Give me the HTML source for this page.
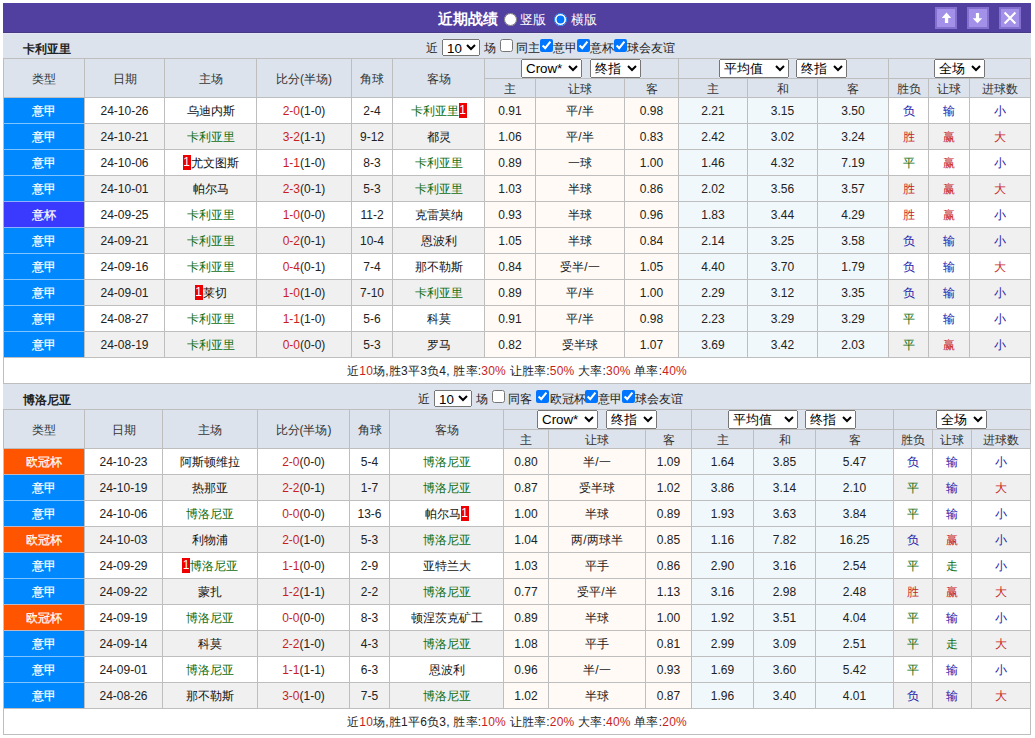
<!DOCTYPE html>
<html><head><meta charset="utf-8"><title>近期战绩</title>
<style>
html,body{margin:0;padding:0;background:#fff;width:1035px;height:738px;overflow:hidden;}
body{font-family:"Liberation Sans",sans-serif;font-size:12px;color:#333;position:relative;}

.c{position:absolute;box-sizing:border-box;white-space:nowrap;overflow:hidden;}
.tn{position:absolute;font-weight:bold;font-size:12px;line-height:32px;height:25px;color:#222;}
.ft{position:absolute;height:25px;line-height:31px;font-size:12px;white-space:nowrap;color:#222;}
.cb{position:absolute;width:13px;height:13px;margin:0;}
.s10{position:absolute;font-family:"Liberation Sans",sans-serif;font-size:13.33px;height:17px;width:38px;padding:0;margin:0;}
.sel{position:absolute;font-family:"Liberation Sans",sans-serif;font-size:13.33px;height:19px;padding:0;margin:0;}
.rc{display:inline-block;background:#e00;color:#fff;line-height:15px;height:15px;width:8px;text-align:center;vertical-align:1px;font-size:12px;}
.title{position:absolute;left:438px;top:4px;height:30px;line-height:30px;color:#fff;font-weight:bold;font-size:15px;}
.rd{position:absolute;width:13px;height:13px;margin:0;}
.rl{position:absolute;top:5px;height:30px;line-height:30px;color:#fff;font-size:12.5px;white-space:nowrap;}
.radios input{width:13px;height:13px;margin:0 4px 0 2px;vertical-align:-2px;position:relative;top:-1px}
.radios span{margin-right:6px;}
.btn{position:absolute;width:22px;height:22px;box-sizing:border-box;background:#a390e8;border:2px solid #8470cf;}
.btn svg{position:absolute;left:-2px;top:-2px;}
</style></head><body>
<div class="c" style="left:3px;top:3px;width:1028px;height:30px;background:#5240a0"></div>
<div class="c" style="left:3px;top:32px;width:1028px;height:1px;background:#463a82"></div>
<div class="title">近期战绩</div>
<input type="radio" name="v" class="rd" style="left:504px;top:13px"><div class="rl" style="left:519.5px">竖版</div><input type="radio" name="v" checked class="rd" style="left:554px;top:13px"><div class="rl" style="left:570.5px">横版</div>
<div class="btn" style="left:935px;top:7px"><svg width="22" height="22" viewBox="0 0 22 22"><path d="M11.5 5.6 L16.3 11 L13.2 11 L13.2 16.1 L9.9 16.1 L9.9 11 L6.7 11 Z" fill="#fff"/></svg></div>
<div class="btn" style="left:967px;top:7px"><svg width="22" height="22" viewBox="0 0 22 22"><path d="M10.5 16.3 L15.3 11.2 L12.1 11.2 L12.1 6 L8.9 6 L8.9 11.2 L5.7 11.2 Z" fill="#fff"/></svg></div>
<div class="btn" style="left:999px;top:7px"><svg width="22" height="22" viewBox="0 0 22 22"><path d="M5.6 5.4 L16.4 16.6 M16.4 5.4 L5.6 16.6" stroke="#fff" stroke-width="2.1"/></svg></div>
<div class="c" style="left:3px;top:33px;width:1028px;height:25px;background:#dce3ec;"></div>
<div class="tn" style="left:23px;top:33px">卡利亚里</div>
<div class="ft" style="left:425.5px;top:33px">近</div>
<select class="s10" style="left:442px;top:39px"><option>10</option></select>
<div class="ft" style="left:483.5px;top:33px">场</div>
<input type="checkbox" class="cb" style="left:500px;top:39px">
<div class="ft" style="left:516px;top:33px">同主</div>
<input type="checkbox" class="cb" style="left:540px;top:39px" checked>
<div class="ft" style="left:553px;top:33px">意甲</div>
<input type="checkbox" class="cb" style="left:577px;top:39px" checked>
<div class="ft" style="left:590px;top:33px">意杯</div>
<input type="checkbox" class="cb" style="left:614px;top:39px" checked>
<div class="ft" style="left:627px;top:33px">球会友谊</div>
<div class="c" style="left:3px;top:58px;width:1028px;height:326px;background:#bebebe;"></div>
<div class="c" style="left:4px;top:59px;width:80px;height:38px;background:#dce3ec;text-align:center;color:#333;line-height:40px;">类型</div>
<div class="c" style="left:85px;top:59px;width:79px;height:38px;background:#dce3ec;text-align:center;color:#333;line-height:40px;">日期</div>
<div class="c" style="left:165px;top:59px;width:91px;height:38px;background:#dce3ec;text-align:center;color:#333;line-height:40px;">主场</div>
<div class="c" style="left:257px;top:59px;width:94px;height:38px;background:#dce3ec;text-align:center;color:#333;line-height:40px;">比分(半场)</div>
<div class="c" style="left:352px;top:59px;width:40px;height:38px;background:#dce3ec;text-align:center;color:#333;line-height:40px;">角球</div>
<div class="c" style="left:393px;top:59px;width:91px;height:38px;background:#dce3ec;text-align:center;color:#333;line-height:40px;">客场</div>
<div class="c" style="left:485px;top:59px;width:193px;height:19px;background:#dce3ec;line-height:21px;"></div>
<div class="c" style="left:679px;top:59px;width:209px;height:19px;background:#dce3ec;line-height:21px;"></div>
<div class="c" style="left:889px;top:59px;width:141px;height:19px;background:#dce3ec;line-height:21px;"></div>
<div class="c" style="left:485px;top:79px;width:50px;height:18px;background:#dce3ec;text-align:center;color:#333;line-height:20px;">主</div>
<div class="c" style="left:536px;top:79px;width:88px;height:18px;background:#dce3ec;text-align:center;color:#333;line-height:20px;">让球</div>
<div class="c" style="left:625px;top:79px;width:53px;height:18px;background:#dce3ec;text-align:center;color:#333;line-height:20px;">客</div>
<div class="c" style="left:679px;top:79px;width:68px;height:18px;background:#dce3ec;text-align:center;color:#333;line-height:20px;">主</div>
<div class="c" style="left:748px;top:79px;width:69px;height:18px;background:#dce3ec;text-align:center;color:#333;line-height:20px;">和</div>
<div class="c" style="left:818px;top:79px;width:70px;height:18px;background:#dce3ec;text-align:center;color:#333;line-height:20px;">客</div>
<div class="c" style="left:889px;top:79px;width:39px;height:18px;background:#dce3ec;text-align:center;color:#333;line-height:20px;">胜负</div>
<div class="c" style="left:929px;top:79px;width:40px;height:18px;background:#dce3ec;text-align:center;color:#333;line-height:20px;">让球</div>
<div class="c" style="left:970px;top:79px;width:60px;height:18px;background:#dce3ec;text-align:center;color:#333;line-height:20px;">进球数</div>
<select class="sel" style="left:521px;top:59px;width:61px"><option>Crow*</option></select>
<select class="sel" style="left:590px;top:59px;width:51px"><option>终指</option></select>
<select class="sel" style="left:719px;top:59px;width:70px"><option>平均值</option></select>
<select class="sel" style="left:796px;top:59px;width:51px"><option>终指</option></select>
<select class="sel" style="left:934px;top:59px;width:51px"><option>全场</option></select>
<div class="c" style="left:4px;top:98px;width:80px;height:25px;background:#0088ff;text-align:center;color:#fff;-webkit-text-stroke:0.25px #fff;line-height:27px;">意甲</div>
<div class="c" style="left:3px;top:98px;width:1px;height:25px;background:#8cc9ff;"></div>
<div class="c" style="left:4px;top:123px;width:80px;height:1px;background:#7fc3ff;"></div>
<div class="c" style="left:85px;top:98px;width:79px;height:25px;background:#ffffff;text-align:center;color:#222;line-height:27px;">24-10-26</div>
<div class="c" style="left:165px;top:98px;width:91px;height:25px;background:#ffffff;text-align:center;line-height:27px;"><span style="color:#111">乌迪内斯</span></div>
<div class="c" style="left:257px;top:98px;width:94px;height:25px;background:#ffffff;text-align:center;line-height:27px;"><span style="color:#c81e1e">2-0</span><span style="color:#222">(1-0)</span></div>
<div class="c" style="left:352px;top:98px;width:40px;height:25px;background:#ffffff;text-align:center;color:#222;line-height:27px;">2-4</div>
<div class="c" style="left:393px;top:98px;width:91px;height:25px;background:#ffffff;text-align:center;line-height:27px;"><span style="color:#0f6d0f">卡利亚里</span><span class="rc">1</span></div>
<div class="c" style="left:485px;top:98px;width:50px;height:25px;background:#fffaf6;text-align:center;color:#222;line-height:27px;">0.91</div>
<div class="c" style="left:536px;top:98px;width:88px;height:25px;background:#fffaf6;text-align:center;color:#222;line-height:27px;">平/半</div>
<div class="c" style="left:625px;top:98px;width:53px;height:25px;background:#fffaf6;text-align:center;color:#222;line-height:27px;">0.98</div>
<div class="c" style="left:679px;top:98px;width:68px;height:25px;background:#f1f8fc;text-align:center;color:#222;line-height:27px;">2.21</div>
<div class="c" style="left:748px;top:98px;width:69px;height:25px;background:#f1f8fc;text-align:center;color:#222;line-height:27px;">3.15</div>
<div class="c" style="left:818px;top:98px;width:70px;height:25px;background:#f1f8fc;text-align:center;color:#222;line-height:27px;">3.50</div>
<div class="c" style="left:889px;top:98px;width:39px;height:25px;background:#ffffff;text-align:center;color:#1a1aaa;line-height:27px;">负</div>
<div class="c" style="left:929px;top:98px;width:40px;height:25px;background:#ffffff;text-align:center;color:#1a1aaa;line-height:27px;">输</div>
<div class="c" style="left:970px;top:98px;width:60px;height:25px;background:#ffffff;text-align:center;color:#1a1aaa;line-height:27px;">小</div>
<div class="c" style="left:4px;top:124px;width:80px;height:25px;background:#0088ff;text-align:center;color:#fff;-webkit-text-stroke:0.25px #fff;line-height:27px;">意甲</div>
<div class="c" style="left:3px;top:124px;width:1px;height:25px;background:#8cc9ff;"></div>
<div class="c" style="left:4px;top:149px;width:80px;height:1px;background:#7fc3ff;"></div>
<div class="c" style="left:85px;top:124px;width:79px;height:25px;background:#f0f0f0;text-align:center;color:#222;line-height:27px;">24-10-21</div>
<div class="c" style="left:165px;top:124px;width:91px;height:25px;background:#f0f0f0;text-align:center;line-height:27px;"><span style="color:#0f6d0f">卡利亚里</span></div>
<div class="c" style="left:257px;top:124px;width:94px;height:25px;background:#f0f0f0;text-align:center;line-height:27px;"><span style="color:#c81e1e">3-2</span><span style="color:#222">(1-1)</span></div>
<div class="c" style="left:352px;top:124px;width:40px;height:25px;background:#f0f0f0;text-align:center;color:#222;line-height:27px;">9-12</div>
<div class="c" style="left:393px;top:124px;width:91px;height:25px;background:#f0f0f0;text-align:center;line-height:27px;"><span style="color:#111">都灵</span></div>
<div class="c" style="left:485px;top:124px;width:50px;height:25px;background:#fffaf6;text-align:center;color:#222;line-height:27px;">1.06</div>
<div class="c" style="left:536px;top:124px;width:88px;height:25px;background:#fffaf6;text-align:center;color:#222;line-height:27px;">平/半</div>
<div class="c" style="left:625px;top:124px;width:53px;height:25px;background:#fffaf6;text-align:center;color:#222;line-height:27px;">0.83</div>
<div class="c" style="left:679px;top:124px;width:68px;height:25px;background:#f1f8fc;text-align:center;color:#222;line-height:27px;">2.42</div>
<div class="c" style="left:748px;top:124px;width:69px;height:25px;background:#f1f8fc;text-align:center;color:#222;line-height:27px;">3.02</div>
<div class="c" style="left:818px;top:124px;width:70px;height:25px;background:#f1f8fc;text-align:center;color:#222;line-height:27px;">3.24</div>
<div class="c" style="left:889px;top:124px;width:39px;height:25px;background:#f0f0f0;text-align:center;color:#c81e1e;line-height:27px;">胜</div>
<div class="c" style="left:929px;top:124px;width:40px;height:25px;background:#f0f0f0;text-align:center;color:#c81e1e;line-height:27px;">赢</div>
<div class="c" style="left:970px;top:124px;width:60px;height:25px;background:#f0f0f0;text-align:center;color:#c81e1e;line-height:27px;">大</div>
<div class="c" style="left:4px;top:150px;width:80px;height:25px;background:#0088ff;text-align:center;color:#fff;-webkit-text-stroke:0.25px #fff;line-height:27px;">意甲</div>
<div class="c" style="left:3px;top:150px;width:1px;height:25px;background:#8cc9ff;"></div>
<div class="c" style="left:4px;top:175px;width:80px;height:1px;background:#7fc3ff;"></div>
<div class="c" style="left:85px;top:150px;width:79px;height:25px;background:#ffffff;text-align:center;color:#222;line-height:27px;">24-10-06</div>
<div class="c" style="left:165px;top:150px;width:91px;height:25px;background:#ffffff;text-align:center;line-height:27px;"><span class="rc">1</span><span style="color:#111">尤文图斯</span></div>
<div class="c" style="left:257px;top:150px;width:94px;height:25px;background:#ffffff;text-align:center;line-height:27px;"><span style="color:#c81e1e">1-1</span><span style="color:#222">(1-0)</span></div>
<div class="c" style="left:352px;top:150px;width:40px;height:25px;background:#ffffff;text-align:center;color:#222;line-height:27px;">8-3</div>
<div class="c" style="left:393px;top:150px;width:91px;height:25px;background:#ffffff;text-align:center;line-height:27px;"><span style="color:#0f6d0f">卡利亚里</span></div>
<div class="c" style="left:485px;top:150px;width:50px;height:25px;background:#fffaf6;text-align:center;color:#222;line-height:27px;">0.89</div>
<div class="c" style="left:536px;top:150px;width:88px;height:25px;background:#fffaf6;text-align:center;color:#222;line-height:27px;">一球</div>
<div class="c" style="left:625px;top:150px;width:53px;height:25px;background:#fffaf6;text-align:center;color:#222;line-height:27px;">1.00</div>
<div class="c" style="left:679px;top:150px;width:68px;height:25px;background:#f1f8fc;text-align:center;color:#222;line-height:27px;">1.46</div>
<div class="c" style="left:748px;top:150px;width:69px;height:25px;background:#f1f8fc;text-align:center;color:#222;line-height:27px;">4.32</div>
<div class="c" style="left:818px;top:150px;width:70px;height:25px;background:#f1f8fc;text-align:center;color:#222;line-height:27px;">7.19</div>
<div class="c" style="left:889px;top:150px;width:39px;height:25px;background:#ffffff;text-align:center;color:#0f6d0f;line-height:27px;">平</div>
<div class="c" style="left:929px;top:150px;width:40px;height:25px;background:#ffffff;text-align:center;color:#c81e1e;line-height:27px;">赢</div>
<div class="c" style="left:970px;top:150px;width:60px;height:25px;background:#ffffff;text-align:center;color:#1a1aaa;line-height:27px;">小</div>
<div class="c" style="left:4px;top:176px;width:80px;height:25px;background:#0088ff;text-align:center;color:#fff;-webkit-text-stroke:0.25px #fff;line-height:27px;">意甲</div>
<div class="c" style="left:3px;top:176px;width:1px;height:25px;background:#8cc9ff;"></div>
<div class="c" style="left:4px;top:201px;width:80px;height:1px;background:#8eb0ff;"></div>
<div class="c" style="left:85px;top:176px;width:79px;height:25px;background:#f0f0f0;text-align:center;color:#222;line-height:27px;">24-10-01</div>
<div class="c" style="left:165px;top:176px;width:91px;height:25px;background:#f0f0f0;text-align:center;line-height:27px;"><span style="color:#111">帕尔马</span></div>
<div class="c" style="left:257px;top:176px;width:94px;height:25px;background:#f0f0f0;text-align:center;line-height:27px;"><span style="color:#c81e1e">2-3</span><span style="color:#222">(0-1)</span></div>
<div class="c" style="left:352px;top:176px;width:40px;height:25px;background:#f0f0f0;text-align:center;color:#222;line-height:27px;">5-3</div>
<div class="c" style="left:393px;top:176px;width:91px;height:25px;background:#f0f0f0;text-align:center;line-height:27px;"><span style="color:#0f6d0f">卡利亚里</span></div>
<div class="c" style="left:485px;top:176px;width:50px;height:25px;background:#fffaf6;text-align:center;color:#222;line-height:27px;">1.03</div>
<div class="c" style="left:536px;top:176px;width:88px;height:25px;background:#fffaf6;text-align:center;color:#222;line-height:27px;">半球</div>
<div class="c" style="left:625px;top:176px;width:53px;height:25px;background:#fffaf6;text-align:center;color:#222;line-height:27px;">0.86</div>
<div class="c" style="left:679px;top:176px;width:68px;height:25px;background:#f1f8fc;text-align:center;color:#222;line-height:27px;">2.02</div>
<div class="c" style="left:748px;top:176px;width:69px;height:25px;background:#f1f8fc;text-align:center;color:#222;line-height:27px;">3.56</div>
<div class="c" style="left:818px;top:176px;width:70px;height:25px;background:#f1f8fc;text-align:center;color:#222;line-height:27px;">3.57</div>
<div class="c" style="left:889px;top:176px;width:39px;height:25px;background:#f0f0f0;text-align:center;color:#c81e1e;line-height:27px;">胜</div>
<div class="c" style="left:929px;top:176px;width:40px;height:25px;background:#f0f0f0;text-align:center;color:#c81e1e;line-height:27px;">赢</div>
<div class="c" style="left:970px;top:176px;width:60px;height:25px;background:#f0f0f0;text-align:center;color:#c81e1e;line-height:27px;">大</div>
<div class="c" style="left:4px;top:202px;width:80px;height:25px;background:#3a3aff;text-align:center;color:#fff;-webkit-text-stroke:0.25px #fff;line-height:27px;">意杯</div>
<div class="c" style="left:3px;top:202px;width:1px;height:25px;background:#a6a6ff;"></div>
<div class="c" style="left:4px;top:227px;width:80px;height:1px;background:#8eb0ff;"></div>
<div class="c" style="left:85px;top:202px;width:79px;height:25px;background:#ffffff;text-align:center;color:#222;line-height:27px;">24-09-25</div>
<div class="c" style="left:165px;top:202px;width:91px;height:25px;background:#ffffff;text-align:center;line-height:27px;"><span style="color:#0f6d0f">卡利亚里</span></div>
<div class="c" style="left:257px;top:202px;width:94px;height:25px;background:#ffffff;text-align:center;line-height:27px;"><span style="color:#c81e1e">1-0</span><span style="color:#222">(0-0)</span></div>
<div class="c" style="left:352px;top:202px;width:40px;height:25px;background:#ffffff;text-align:center;color:#222;line-height:27px;">11-2</div>
<div class="c" style="left:393px;top:202px;width:91px;height:25px;background:#ffffff;text-align:center;line-height:27px;"><span style="color:#111">克雷莫纳</span></div>
<div class="c" style="left:485px;top:202px;width:50px;height:25px;background:#fffaf6;text-align:center;color:#222;line-height:27px;">0.93</div>
<div class="c" style="left:536px;top:202px;width:88px;height:25px;background:#fffaf6;text-align:center;color:#222;line-height:27px;">半球</div>
<div class="c" style="left:625px;top:202px;width:53px;height:25px;background:#fffaf6;text-align:center;color:#222;line-height:27px;">0.96</div>
<div class="c" style="left:679px;top:202px;width:68px;height:25px;background:#f1f8fc;text-align:center;color:#222;line-height:27px;">1.83</div>
<div class="c" style="left:748px;top:202px;width:69px;height:25px;background:#f1f8fc;text-align:center;color:#222;line-height:27px;">3.44</div>
<div class="c" style="left:818px;top:202px;width:70px;height:25px;background:#f1f8fc;text-align:center;color:#222;line-height:27px;">4.29</div>
<div class="c" style="left:889px;top:202px;width:39px;height:25px;background:#ffffff;text-align:center;color:#c81e1e;line-height:27px;">胜</div>
<div class="c" style="left:929px;top:202px;width:40px;height:25px;background:#ffffff;text-align:center;color:#c81e1e;line-height:27px;">赢</div>
<div class="c" style="left:970px;top:202px;width:60px;height:25px;background:#ffffff;text-align:center;color:#1a1aaa;line-height:27px;">小</div>
<div class="c" style="left:4px;top:228px;width:80px;height:25px;background:#0088ff;text-align:center;color:#fff;-webkit-text-stroke:0.25px #fff;line-height:27px;">意甲</div>
<div class="c" style="left:3px;top:228px;width:1px;height:25px;background:#8cc9ff;"></div>
<div class="c" style="left:4px;top:253px;width:80px;height:1px;background:#7fc3ff;"></div>
<div class="c" style="left:85px;top:228px;width:79px;height:25px;background:#f0f0f0;text-align:center;color:#222;line-height:27px;">24-09-21</div>
<div class="c" style="left:165px;top:228px;width:91px;height:25px;background:#f0f0f0;text-align:center;line-height:27px;"><span style="color:#0f6d0f">卡利亚里</span></div>
<div class="c" style="left:257px;top:228px;width:94px;height:25px;background:#f0f0f0;text-align:center;line-height:27px;"><span style="color:#c81e1e">0-2</span><span style="color:#222">(0-1)</span></div>
<div class="c" style="left:352px;top:228px;width:40px;height:25px;background:#f0f0f0;text-align:center;color:#222;line-height:27px;">10-4</div>
<div class="c" style="left:393px;top:228px;width:91px;height:25px;background:#f0f0f0;text-align:center;line-height:27px;"><span style="color:#111">恩波利</span></div>
<div class="c" style="left:485px;top:228px;width:50px;height:25px;background:#fffaf6;text-align:center;color:#222;line-height:27px;">1.05</div>
<div class="c" style="left:536px;top:228px;width:88px;height:25px;background:#fffaf6;text-align:center;color:#222;line-height:27px;">半球</div>
<div class="c" style="left:625px;top:228px;width:53px;height:25px;background:#fffaf6;text-align:center;color:#222;line-height:27px;">0.84</div>
<div class="c" style="left:679px;top:228px;width:68px;height:25px;background:#f1f8fc;text-align:center;color:#222;line-height:27px;">2.14</div>
<div class="c" style="left:748px;top:228px;width:69px;height:25px;background:#f1f8fc;text-align:center;color:#222;line-height:27px;">3.25</div>
<div class="c" style="left:818px;top:228px;width:70px;height:25px;background:#f1f8fc;text-align:center;color:#222;line-height:27px;">3.58</div>
<div class="c" style="left:889px;top:228px;width:39px;height:25px;background:#f0f0f0;text-align:center;color:#1a1aaa;line-height:27px;">负</div>
<div class="c" style="left:929px;top:228px;width:40px;height:25px;background:#f0f0f0;text-align:center;color:#1a1aaa;line-height:27px;">输</div>
<div class="c" style="left:970px;top:228px;width:60px;height:25px;background:#f0f0f0;text-align:center;color:#1a1aaa;line-height:27px;">小</div>
<div class="c" style="left:4px;top:254px;width:80px;height:25px;background:#0088ff;text-align:center;color:#fff;-webkit-text-stroke:0.25px #fff;line-height:27px;">意甲</div>
<div class="c" style="left:3px;top:254px;width:1px;height:25px;background:#8cc9ff;"></div>
<div class="c" style="left:4px;top:279px;width:80px;height:1px;background:#7fc3ff;"></div>
<div class="c" style="left:85px;top:254px;width:79px;height:25px;background:#ffffff;text-align:center;color:#222;line-height:27px;">24-09-16</div>
<div class="c" style="left:165px;top:254px;width:91px;height:25px;background:#ffffff;text-align:center;line-height:27px;"><span style="color:#0f6d0f">卡利亚里</span></div>
<div class="c" style="left:257px;top:254px;width:94px;height:25px;background:#ffffff;text-align:center;line-height:27px;"><span style="color:#c81e1e">0-4</span><span style="color:#222">(0-1)</span></div>
<div class="c" style="left:352px;top:254px;width:40px;height:25px;background:#ffffff;text-align:center;color:#222;line-height:27px;">7-4</div>
<div class="c" style="left:393px;top:254px;width:91px;height:25px;background:#ffffff;text-align:center;line-height:27px;"><span style="color:#111">那不勒斯</span></div>
<div class="c" style="left:485px;top:254px;width:50px;height:25px;background:#fffaf6;text-align:center;color:#222;line-height:27px;">0.84</div>
<div class="c" style="left:536px;top:254px;width:88px;height:25px;background:#fffaf6;text-align:center;color:#222;line-height:27px;">受半/一</div>
<div class="c" style="left:625px;top:254px;width:53px;height:25px;background:#fffaf6;text-align:center;color:#222;line-height:27px;">1.05</div>
<div class="c" style="left:679px;top:254px;width:68px;height:25px;background:#f1f8fc;text-align:center;color:#222;line-height:27px;">4.40</div>
<div class="c" style="left:748px;top:254px;width:69px;height:25px;background:#f1f8fc;text-align:center;color:#222;line-height:27px;">3.70</div>
<div class="c" style="left:818px;top:254px;width:70px;height:25px;background:#f1f8fc;text-align:center;color:#222;line-height:27px;">1.79</div>
<div class="c" style="left:889px;top:254px;width:39px;height:25px;background:#ffffff;text-align:center;color:#1a1aaa;line-height:27px;">负</div>
<div class="c" style="left:929px;top:254px;width:40px;height:25px;background:#ffffff;text-align:center;color:#1a1aaa;line-height:27px;">输</div>
<div class="c" style="left:970px;top:254px;width:60px;height:25px;background:#ffffff;text-align:center;color:#c81e1e;line-height:27px;">大</div>
<div class="c" style="left:4px;top:280px;width:80px;height:25px;background:#0088ff;text-align:center;color:#fff;-webkit-text-stroke:0.25px #fff;line-height:27px;">意甲</div>
<div class="c" style="left:3px;top:280px;width:1px;height:25px;background:#8cc9ff;"></div>
<div class="c" style="left:4px;top:305px;width:80px;height:1px;background:#7fc3ff;"></div>
<div class="c" style="left:85px;top:280px;width:79px;height:25px;background:#f0f0f0;text-align:center;color:#222;line-height:27px;">24-09-01</div>
<div class="c" style="left:165px;top:280px;width:91px;height:25px;background:#f0f0f0;text-align:center;line-height:27px;"><span class="rc">1</span><span style="color:#111">莱切</span></div>
<div class="c" style="left:257px;top:280px;width:94px;height:25px;background:#f0f0f0;text-align:center;line-height:27px;"><span style="color:#c81e1e">1-0</span><span style="color:#222">(1-0)</span></div>
<div class="c" style="left:352px;top:280px;width:40px;height:25px;background:#f0f0f0;text-align:center;color:#222;line-height:27px;">7-10</div>
<div class="c" style="left:393px;top:280px;width:91px;height:25px;background:#f0f0f0;text-align:center;line-height:27px;"><span style="color:#0f6d0f">卡利亚里</span></div>
<div class="c" style="left:485px;top:280px;width:50px;height:25px;background:#fffaf6;text-align:center;color:#222;line-height:27px;">0.89</div>
<div class="c" style="left:536px;top:280px;width:88px;height:25px;background:#fffaf6;text-align:center;color:#222;line-height:27px;">平/半</div>
<div class="c" style="left:625px;top:280px;width:53px;height:25px;background:#fffaf6;text-align:center;color:#222;line-height:27px;">1.00</div>
<div class="c" style="left:679px;top:280px;width:68px;height:25px;background:#f1f8fc;text-align:center;color:#222;line-height:27px;">2.29</div>
<div class="c" style="left:748px;top:280px;width:69px;height:25px;background:#f1f8fc;text-align:center;color:#222;line-height:27px;">3.12</div>
<div class="c" style="left:818px;top:280px;width:70px;height:25px;background:#f1f8fc;text-align:center;color:#222;line-height:27px;">3.35</div>
<div class="c" style="left:889px;top:280px;width:39px;height:25px;background:#f0f0f0;text-align:center;color:#1a1aaa;line-height:27px;">负</div>
<div class="c" style="left:929px;top:280px;width:40px;height:25px;background:#f0f0f0;text-align:center;color:#1a1aaa;line-height:27px;">输</div>
<div class="c" style="left:970px;top:280px;width:60px;height:25px;background:#f0f0f0;text-align:center;color:#1a1aaa;line-height:27px;">小</div>
<div class="c" style="left:4px;top:306px;width:80px;height:25px;background:#0088ff;text-align:center;color:#fff;-webkit-text-stroke:0.25px #fff;line-height:27px;">意甲</div>
<div class="c" style="left:3px;top:306px;width:1px;height:25px;background:#8cc9ff;"></div>
<div class="c" style="left:4px;top:331px;width:80px;height:1px;background:#7fc3ff;"></div>
<div class="c" style="left:85px;top:306px;width:79px;height:25px;background:#ffffff;text-align:center;color:#222;line-height:27px;">24-08-27</div>
<div class="c" style="left:165px;top:306px;width:91px;height:25px;background:#ffffff;text-align:center;line-height:27px;"><span style="color:#0f6d0f">卡利亚里</span></div>
<div class="c" style="left:257px;top:306px;width:94px;height:25px;background:#ffffff;text-align:center;line-height:27px;"><span style="color:#c81e1e">1-1</span><span style="color:#222">(1-0)</span></div>
<div class="c" style="left:352px;top:306px;width:40px;height:25px;background:#ffffff;text-align:center;color:#222;line-height:27px;">5-6</div>
<div class="c" style="left:393px;top:306px;width:91px;height:25px;background:#ffffff;text-align:center;line-height:27px;"><span style="color:#111">科莫</span></div>
<div class="c" style="left:485px;top:306px;width:50px;height:25px;background:#fffaf6;text-align:center;color:#222;line-height:27px;">0.91</div>
<div class="c" style="left:536px;top:306px;width:88px;height:25px;background:#fffaf6;text-align:center;color:#222;line-height:27px;">平/半</div>
<div class="c" style="left:625px;top:306px;width:53px;height:25px;background:#fffaf6;text-align:center;color:#222;line-height:27px;">0.98</div>
<div class="c" style="left:679px;top:306px;width:68px;height:25px;background:#f1f8fc;text-align:center;color:#222;line-height:27px;">2.23</div>
<div class="c" style="left:748px;top:306px;width:69px;height:25px;background:#f1f8fc;text-align:center;color:#222;line-height:27px;">3.29</div>
<div class="c" style="left:818px;top:306px;width:70px;height:25px;background:#f1f8fc;text-align:center;color:#222;line-height:27px;">3.29</div>
<div class="c" style="left:889px;top:306px;width:39px;height:25px;background:#ffffff;text-align:center;color:#0f6d0f;line-height:27px;">平</div>
<div class="c" style="left:929px;top:306px;width:40px;height:25px;background:#ffffff;text-align:center;color:#1a1aaa;line-height:27px;">输</div>
<div class="c" style="left:970px;top:306px;width:60px;height:25px;background:#ffffff;text-align:center;color:#1a1aaa;line-height:27px;">小</div>
<div class="c" style="left:4px;top:332px;width:80px;height:25px;background:#0088ff;text-align:center;color:#fff;-webkit-text-stroke:0.25px #fff;line-height:27px;">意甲</div>
<div class="c" style="left:3px;top:332px;width:1px;height:25px;background:#8cc9ff;"></div>
<div class="c" style="left:85px;top:332px;width:79px;height:25px;background:#f0f0f0;text-align:center;color:#222;line-height:27px;">24-08-19</div>
<div class="c" style="left:165px;top:332px;width:91px;height:25px;background:#f0f0f0;text-align:center;line-height:27px;"><span style="color:#0f6d0f">卡利亚里</span></div>
<div class="c" style="left:257px;top:332px;width:94px;height:25px;background:#f0f0f0;text-align:center;line-height:27px;"><span style="color:#c81e1e">0-0</span><span style="color:#222">(0-0)</span></div>
<div class="c" style="left:352px;top:332px;width:40px;height:25px;background:#f0f0f0;text-align:center;color:#222;line-height:27px;">5-3</div>
<div class="c" style="left:393px;top:332px;width:91px;height:25px;background:#f0f0f0;text-align:center;line-height:27px;"><span style="color:#111">罗马</span></div>
<div class="c" style="left:485px;top:332px;width:50px;height:25px;background:#fffaf6;text-align:center;color:#222;line-height:27px;">0.82</div>
<div class="c" style="left:536px;top:332px;width:88px;height:25px;background:#fffaf6;text-align:center;color:#222;line-height:27px;">受半球</div>
<div class="c" style="left:625px;top:332px;width:53px;height:25px;background:#fffaf6;text-align:center;color:#222;line-height:27px;">1.07</div>
<div class="c" style="left:679px;top:332px;width:68px;height:25px;background:#f1f8fc;text-align:center;color:#222;line-height:27px;">3.69</div>
<div class="c" style="left:748px;top:332px;width:69px;height:25px;background:#f1f8fc;text-align:center;color:#222;line-height:27px;">3.42</div>
<div class="c" style="left:818px;top:332px;width:70px;height:25px;background:#f1f8fc;text-align:center;color:#222;line-height:27px;">2.03</div>
<div class="c" style="left:889px;top:332px;width:39px;height:25px;background:#f0f0f0;text-align:center;color:#0f6d0f;line-height:27px;">平</div>
<div class="c" style="left:929px;top:332px;width:40px;height:25px;background:#f0f0f0;text-align:center;color:#c81e1e;line-height:27px;">赢</div>
<div class="c" style="left:970px;top:332px;width:60px;height:25px;background:#f0f0f0;text-align:center;color:#1a1aaa;line-height:27px;">小</div>
<div class="c" style="left:4px;top:358px;width:1026px;height:25px;background:#fff;text-align:center;line-height:26px;color:#222;letter-spacing:0.22px;">近<span style="color:#c81e1e">10</span>场,胜3平3负4, 胜率:<span style="color:#c81e1e">30%</span> 让胜率:<span style="color:#c81e1e">50%</span> 大率:<span style="color:#c81e1e">30%</span> 单率:<span style="color:#c81e1e">40%</span></div>
<div class="c" style="left:3px;top:384px;width:1028px;height:25px;background:#dce3ec;"></div>
<div class="tn" style="left:23px;top:384px">博洛尼亚</div>
<div class="ft" style="left:417.5px;top:384px">近</div>
<select class="s10" style="left:434px;top:390px"><option>10</option></select>
<div class="ft" style="left:476px;top:384px">场</div>
<input type="checkbox" class="cb" style="left:492px;top:390px">
<div class="ft" style="left:508px;top:384px">同客</div>
<input type="checkbox" class="cb" style="left:536px;top:390px" checked>
<div class="ft" style="left:549.5px;top:384px">欧冠杯</div>
<input type="checkbox" class="cb" style="left:585px;top:390px" checked>
<div class="ft" style="left:598px;top:384px">意甲</div>
<input type="checkbox" class="cb" style="left:622px;top:390px" checked>
<div class="ft" style="left:635px;top:384px">球会友谊</div>
<div class="c" style="left:3px;top:409px;width:1028px;height:326px;background:#bebebe;"></div>
<div class="c" style="left:4px;top:410px;width:80px;height:38px;background:#dce3ec;text-align:center;color:#333;line-height:40px;">类型</div>
<div class="c" style="left:85px;top:410px;width:77px;height:38px;background:#dce3ec;text-align:center;color:#333;line-height:40px;">日期</div>
<div class="c" style="left:163px;top:410px;width:94px;height:38px;background:#dce3ec;text-align:center;color:#333;line-height:40px;">主场</div>
<div class="c" style="left:258px;top:410px;width:91px;height:38px;background:#dce3ec;text-align:center;color:#333;line-height:40px;">比分(半场)</div>
<div class="c" style="left:350px;top:410px;width:39px;height:38px;background:#dce3ec;text-align:center;color:#333;line-height:40px;">角球</div>
<div class="c" style="left:390px;top:410px;width:113px;height:38px;background:#dce3ec;text-align:center;color:#333;line-height:40px;">客场</div>
<div class="c" style="left:504px;top:410px;width:187px;height:19px;background:#dce3ec;line-height:21px;"></div>
<div class="c" style="left:692px;top:410px;width:201px;height:19px;background:#dce3ec;line-height:21px;"></div>
<div class="c" style="left:894px;top:410px;width:136px;height:19px;background:#dce3ec;line-height:21px;"></div>
<div class="c" style="left:504px;top:430px;width:44px;height:18px;background:#dce3ec;text-align:center;color:#333;line-height:20px;">主</div>
<div class="c" style="left:549px;top:430px;width:96px;height:18px;background:#dce3ec;text-align:center;color:#333;line-height:20px;">让球</div>
<div class="c" style="left:646px;top:430px;width:45px;height:18px;background:#dce3ec;text-align:center;color:#333;line-height:20px;">客</div>
<div class="c" style="left:692px;top:430px;width:61px;height:18px;background:#dce3ec;text-align:center;color:#333;line-height:20px;">主</div>
<div class="c" style="left:754px;top:430px;width:61px;height:18px;background:#dce3ec;text-align:center;color:#333;line-height:20px;">和</div>
<div class="c" style="left:816px;top:430px;width:77px;height:18px;background:#dce3ec;text-align:center;color:#333;line-height:20px;">客</div>
<div class="c" style="left:894px;top:430px;width:38px;height:18px;background:#dce3ec;text-align:center;color:#333;line-height:20px;">胜负</div>
<div class="c" style="left:933px;top:430px;width:38px;height:18px;background:#dce3ec;text-align:center;color:#333;line-height:20px;">让球</div>
<div class="c" style="left:972px;top:430px;width:58px;height:18px;background:#dce3ec;text-align:center;color:#333;line-height:20px;">进球数</div>
<select class="sel" style="left:537px;top:410px;width:61px"><option>Crow*</option></select>
<select class="sel" style="left:606px;top:410px;width:51px"><option>终指</option></select>
<select class="sel" style="left:728px;top:410px;width:70px"><option>平均值</option></select>
<select class="sel" style="left:805px;top:410px;width:51px"><option>终指</option></select>
<select class="sel" style="left:936px;top:410px;width:51px"><option>全场</option></select>
<div class="c" style="left:4px;top:449px;width:80px;height:25px;background:#ff5400;text-align:center;color:#fff;-webkit-text-stroke:0.25px #fff;line-height:27px;">欧冠杯</div>
<div class="c" style="left:3px;top:449px;width:1px;height:25px;background:#ffb28c;"></div>
<div class="c" style="left:4px;top:474px;width:80px;height:1px;background:#bfb6bf;"></div>
<div class="c" style="left:85px;top:449px;width:77px;height:25px;background:#ffffff;text-align:center;color:#222;line-height:27px;">24-10-23</div>
<div class="c" style="left:163px;top:449px;width:94px;height:25px;background:#ffffff;text-align:center;line-height:27px;"><span style="color:#111">阿斯顿维拉</span></div>
<div class="c" style="left:258px;top:449px;width:91px;height:25px;background:#ffffff;text-align:center;line-height:27px;"><span style="color:#c81e1e">2-0</span><span style="color:#222">(0-0)</span></div>
<div class="c" style="left:350px;top:449px;width:39px;height:25px;background:#ffffff;text-align:center;color:#222;line-height:27px;">5-4</div>
<div class="c" style="left:390px;top:449px;width:113px;height:25px;background:#ffffff;text-align:center;line-height:27px;"><span style="color:#0f6d0f">博洛尼亚</span></div>
<div class="c" style="left:504px;top:449px;width:44px;height:25px;background:#fffaf6;text-align:center;color:#222;line-height:27px;">0.80</div>
<div class="c" style="left:549px;top:449px;width:96px;height:25px;background:#fffaf6;text-align:center;color:#222;line-height:27px;">半/一</div>
<div class="c" style="left:646px;top:449px;width:45px;height:25px;background:#fffaf6;text-align:center;color:#222;line-height:27px;">1.09</div>
<div class="c" style="left:692px;top:449px;width:61px;height:25px;background:#f1f8fc;text-align:center;color:#222;line-height:27px;">1.64</div>
<div class="c" style="left:754px;top:449px;width:61px;height:25px;background:#f1f8fc;text-align:center;color:#222;line-height:27px;">3.85</div>
<div class="c" style="left:816px;top:449px;width:77px;height:25px;background:#f1f8fc;text-align:center;color:#222;line-height:27px;">5.47</div>
<div class="c" style="left:894px;top:449px;width:38px;height:25px;background:#ffffff;text-align:center;color:#1a1aaa;line-height:27px;">负</div>
<div class="c" style="left:933px;top:449px;width:38px;height:25px;background:#ffffff;text-align:center;color:#1a1aaa;line-height:27px;">输</div>
<div class="c" style="left:972px;top:449px;width:58px;height:25px;background:#ffffff;text-align:center;color:#1a1aaa;line-height:27px;">小</div>
<div class="c" style="left:4px;top:475px;width:80px;height:25px;background:#0088ff;text-align:center;color:#fff;-webkit-text-stroke:0.25px #fff;line-height:27px;">意甲</div>
<div class="c" style="left:3px;top:475px;width:1px;height:25px;background:#8cc9ff;"></div>
<div class="c" style="left:4px;top:500px;width:80px;height:1px;background:#7fc3ff;"></div>
<div class="c" style="left:85px;top:475px;width:77px;height:25px;background:#f0f0f0;text-align:center;color:#222;line-height:27px;">24-10-19</div>
<div class="c" style="left:163px;top:475px;width:94px;height:25px;background:#f0f0f0;text-align:center;line-height:27px;"><span style="color:#111">热那亚</span></div>
<div class="c" style="left:258px;top:475px;width:91px;height:25px;background:#f0f0f0;text-align:center;line-height:27px;"><span style="color:#c81e1e">2-2</span><span style="color:#222">(0-1)</span></div>
<div class="c" style="left:350px;top:475px;width:39px;height:25px;background:#f0f0f0;text-align:center;color:#222;line-height:27px;">1-7</div>
<div class="c" style="left:390px;top:475px;width:113px;height:25px;background:#f0f0f0;text-align:center;line-height:27px;"><span style="color:#0f6d0f">博洛尼亚</span></div>
<div class="c" style="left:504px;top:475px;width:44px;height:25px;background:#fffaf6;text-align:center;color:#222;line-height:27px;">0.87</div>
<div class="c" style="left:549px;top:475px;width:96px;height:25px;background:#fffaf6;text-align:center;color:#222;line-height:27px;">受半球</div>
<div class="c" style="left:646px;top:475px;width:45px;height:25px;background:#fffaf6;text-align:center;color:#222;line-height:27px;">1.02</div>
<div class="c" style="left:692px;top:475px;width:61px;height:25px;background:#f1f8fc;text-align:center;color:#222;line-height:27px;">3.86</div>
<div class="c" style="left:754px;top:475px;width:61px;height:25px;background:#f1f8fc;text-align:center;color:#222;line-height:27px;">3.14</div>
<div class="c" style="left:816px;top:475px;width:77px;height:25px;background:#f1f8fc;text-align:center;color:#222;line-height:27px;">2.10</div>
<div class="c" style="left:894px;top:475px;width:38px;height:25px;background:#f0f0f0;text-align:center;color:#0f6d0f;line-height:27px;">平</div>
<div class="c" style="left:933px;top:475px;width:38px;height:25px;background:#f0f0f0;text-align:center;color:#1a1aaa;line-height:27px;">输</div>
<div class="c" style="left:972px;top:475px;width:58px;height:25px;background:#f0f0f0;text-align:center;color:#c81e1e;line-height:27px;">大</div>
<div class="c" style="left:4px;top:501px;width:80px;height:25px;background:#0088ff;text-align:center;color:#fff;-webkit-text-stroke:0.25px #fff;line-height:27px;">意甲</div>
<div class="c" style="left:3px;top:501px;width:1px;height:25px;background:#8cc9ff;"></div>
<div class="c" style="left:4px;top:526px;width:80px;height:1px;background:#bfb6bf;"></div>
<div class="c" style="left:85px;top:501px;width:77px;height:25px;background:#ffffff;text-align:center;color:#222;line-height:27px;">24-10-06</div>
<div class="c" style="left:163px;top:501px;width:94px;height:25px;background:#ffffff;text-align:center;line-height:27px;"><span style="color:#0f6d0f">博洛尼亚</span></div>
<div class="c" style="left:258px;top:501px;width:91px;height:25px;background:#ffffff;text-align:center;line-height:27px;"><span style="color:#c81e1e">0-0</span><span style="color:#222">(0-0)</span></div>
<div class="c" style="left:350px;top:501px;width:39px;height:25px;background:#ffffff;text-align:center;color:#222;line-height:27px;">13-6</div>
<div class="c" style="left:390px;top:501px;width:113px;height:25px;background:#ffffff;text-align:center;line-height:27px;"><span style="color:#111">帕尔马</span><span class="rc">1</span></div>
<div class="c" style="left:504px;top:501px;width:44px;height:25px;background:#fffaf6;text-align:center;color:#222;line-height:27px;">1.00</div>
<div class="c" style="left:549px;top:501px;width:96px;height:25px;background:#fffaf6;text-align:center;color:#222;line-height:27px;">半球</div>
<div class="c" style="left:646px;top:501px;width:45px;height:25px;background:#fffaf6;text-align:center;color:#222;line-height:27px;">0.89</div>
<div class="c" style="left:692px;top:501px;width:61px;height:25px;background:#f1f8fc;text-align:center;color:#222;line-height:27px;">1.93</div>
<div class="c" style="left:754px;top:501px;width:61px;height:25px;background:#f1f8fc;text-align:center;color:#222;line-height:27px;">3.63</div>
<div class="c" style="left:816px;top:501px;width:77px;height:25px;background:#f1f8fc;text-align:center;color:#222;line-height:27px;">3.84</div>
<div class="c" style="left:894px;top:501px;width:38px;height:25px;background:#ffffff;text-align:center;color:#0f6d0f;line-height:27px;">平</div>
<div class="c" style="left:933px;top:501px;width:38px;height:25px;background:#ffffff;text-align:center;color:#1a1aaa;line-height:27px;">输</div>
<div class="c" style="left:972px;top:501px;width:58px;height:25px;background:#ffffff;text-align:center;color:#1a1aaa;line-height:27px;">小</div>
<div class="c" style="left:4px;top:527px;width:80px;height:25px;background:#ff5400;text-align:center;color:#fff;-webkit-text-stroke:0.25px #fff;line-height:27px;">欧冠杯</div>
<div class="c" style="left:3px;top:527px;width:1px;height:25px;background:#ffb28c;"></div>
<div class="c" style="left:4px;top:552px;width:80px;height:1px;background:#bfb6bf;"></div>
<div class="c" style="left:85px;top:527px;width:77px;height:25px;background:#f0f0f0;text-align:center;color:#222;line-height:27px;">24-10-03</div>
<div class="c" style="left:163px;top:527px;width:94px;height:25px;background:#f0f0f0;text-align:center;line-height:27px;"><span style="color:#111">利物浦</span></div>
<div class="c" style="left:258px;top:527px;width:91px;height:25px;background:#f0f0f0;text-align:center;line-height:27px;"><span style="color:#c81e1e">2-0</span><span style="color:#222">(1-0)</span></div>
<div class="c" style="left:350px;top:527px;width:39px;height:25px;background:#f0f0f0;text-align:center;color:#222;line-height:27px;">5-3</div>
<div class="c" style="left:390px;top:527px;width:113px;height:25px;background:#f0f0f0;text-align:center;line-height:27px;"><span style="color:#0f6d0f">博洛尼亚</span></div>
<div class="c" style="left:504px;top:527px;width:44px;height:25px;background:#fffaf6;text-align:center;color:#222;line-height:27px;">1.04</div>
<div class="c" style="left:549px;top:527px;width:96px;height:25px;background:#fffaf6;text-align:center;color:#222;line-height:27px;">两/两球半</div>
<div class="c" style="left:646px;top:527px;width:45px;height:25px;background:#fffaf6;text-align:center;color:#222;line-height:27px;">0.85</div>
<div class="c" style="left:692px;top:527px;width:61px;height:25px;background:#f1f8fc;text-align:center;color:#222;line-height:27px;">1.16</div>
<div class="c" style="left:754px;top:527px;width:61px;height:25px;background:#f1f8fc;text-align:center;color:#222;line-height:27px;">7.82</div>
<div class="c" style="left:816px;top:527px;width:77px;height:25px;background:#f1f8fc;text-align:center;color:#222;line-height:27px;">16.25</div>
<div class="c" style="left:894px;top:527px;width:38px;height:25px;background:#f0f0f0;text-align:center;color:#1a1aaa;line-height:27px;">负</div>
<div class="c" style="left:933px;top:527px;width:38px;height:25px;background:#f0f0f0;text-align:center;color:#c81e1e;line-height:27px;">赢</div>
<div class="c" style="left:972px;top:527px;width:58px;height:25px;background:#f0f0f0;text-align:center;color:#1a1aaa;line-height:27px;">小</div>
<div class="c" style="left:4px;top:553px;width:80px;height:25px;background:#0088ff;text-align:center;color:#fff;-webkit-text-stroke:0.25px #fff;line-height:27px;">意甲</div>
<div class="c" style="left:3px;top:553px;width:1px;height:25px;background:#8cc9ff;"></div>
<div class="c" style="left:4px;top:578px;width:80px;height:1px;background:#7fc3ff;"></div>
<div class="c" style="left:85px;top:553px;width:77px;height:25px;background:#ffffff;text-align:center;color:#222;line-height:27px;">24-09-29</div>
<div class="c" style="left:163px;top:553px;width:94px;height:25px;background:#ffffff;text-align:center;line-height:27px;"><span class="rc">1</span><span style="color:#0f6d0f">博洛尼亚</span></div>
<div class="c" style="left:258px;top:553px;width:91px;height:25px;background:#ffffff;text-align:center;line-height:27px;"><span style="color:#c81e1e">1-1</span><span style="color:#222">(0-0)</span></div>
<div class="c" style="left:350px;top:553px;width:39px;height:25px;background:#ffffff;text-align:center;color:#222;line-height:27px;">2-9</div>
<div class="c" style="left:390px;top:553px;width:113px;height:25px;background:#ffffff;text-align:center;line-height:27px;"><span style="color:#111">亚特兰大</span></div>
<div class="c" style="left:504px;top:553px;width:44px;height:25px;background:#fffaf6;text-align:center;color:#222;line-height:27px;">1.03</div>
<div class="c" style="left:549px;top:553px;width:96px;height:25px;background:#fffaf6;text-align:center;color:#222;line-height:27px;">平手</div>
<div class="c" style="left:646px;top:553px;width:45px;height:25px;background:#fffaf6;text-align:center;color:#222;line-height:27px;">0.86</div>
<div class="c" style="left:692px;top:553px;width:61px;height:25px;background:#f1f8fc;text-align:center;color:#222;line-height:27px;">2.90</div>
<div class="c" style="left:754px;top:553px;width:61px;height:25px;background:#f1f8fc;text-align:center;color:#222;line-height:27px;">3.16</div>
<div class="c" style="left:816px;top:553px;width:77px;height:25px;background:#f1f8fc;text-align:center;color:#222;line-height:27px;">2.54</div>
<div class="c" style="left:894px;top:553px;width:38px;height:25px;background:#ffffff;text-align:center;color:#0f6d0f;line-height:27px;">平</div>
<div class="c" style="left:933px;top:553px;width:38px;height:25px;background:#ffffff;text-align:center;color:#0f6d0f;line-height:27px;">走</div>
<div class="c" style="left:972px;top:553px;width:58px;height:25px;background:#ffffff;text-align:center;color:#1a1aaa;line-height:27px;">小</div>
<div class="c" style="left:4px;top:579px;width:80px;height:25px;background:#0088ff;text-align:center;color:#fff;-webkit-text-stroke:0.25px #fff;line-height:27px;">意甲</div>
<div class="c" style="left:3px;top:579px;width:1px;height:25px;background:#8cc9ff;"></div>
<div class="c" style="left:4px;top:604px;width:80px;height:1px;background:#bfb6bf;"></div>
<div class="c" style="left:85px;top:579px;width:77px;height:25px;background:#f0f0f0;text-align:center;color:#222;line-height:27px;">24-09-22</div>
<div class="c" style="left:163px;top:579px;width:94px;height:25px;background:#f0f0f0;text-align:center;line-height:27px;"><span style="color:#111">蒙扎</span></div>
<div class="c" style="left:258px;top:579px;width:91px;height:25px;background:#f0f0f0;text-align:center;line-height:27px;"><span style="color:#c81e1e">1-2</span><span style="color:#222">(1-1)</span></div>
<div class="c" style="left:350px;top:579px;width:39px;height:25px;background:#f0f0f0;text-align:center;color:#222;line-height:27px;">2-2</div>
<div class="c" style="left:390px;top:579px;width:113px;height:25px;background:#f0f0f0;text-align:center;line-height:27px;"><span style="color:#0f6d0f">博洛尼亚</span></div>
<div class="c" style="left:504px;top:579px;width:44px;height:25px;background:#fffaf6;text-align:center;color:#222;line-height:27px;">0.77</div>
<div class="c" style="left:549px;top:579px;width:96px;height:25px;background:#fffaf6;text-align:center;color:#222;line-height:27px;">受平/半</div>
<div class="c" style="left:646px;top:579px;width:45px;height:25px;background:#fffaf6;text-align:center;color:#222;line-height:27px;">1.13</div>
<div class="c" style="left:692px;top:579px;width:61px;height:25px;background:#f1f8fc;text-align:center;color:#222;line-height:27px;">3.16</div>
<div class="c" style="left:754px;top:579px;width:61px;height:25px;background:#f1f8fc;text-align:center;color:#222;line-height:27px;">2.98</div>
<div class="c" style="left:816px;top:579px;width:77px;height:25px;background:#f1f8fc;text-align:center;color:#222;line-height:27px;">2.48</div>
<div class="c" style="left:894px;top:579px;width:38px;height:25px;background:#f0f0f0;text-align:center;color:#c81e1e;line-height:27px;">胜</div>
<div class="c" style="left:933px;top:579px;width:38px;height:25px;background:#f0f0f0;text-align:center;color:#c81e1e;line-height:27px;">赢</div>
<div class="c" style="left:972px;top:579px;width:58px;height:25px;background:#f0f0f0;text-align:center;color:#c81e1e;line-height:27px;">大</div>
<div class="c" style="left:4px;top:605px;width:80px;height:25px;background:#ff5400;text-align:center;color:#fff;-webkit-text-stroke:0.25px #fff;line-height:27px;">欧冠杯</div>
<div class="c" style="left:3px;top:605px;width:1px;height:25px;background:#ffb28c;"></div>
<div class="c" style="left:4px;top:630px;width:80px;height:1px;background:#bfb6bf;"></div>
<div class="c" style="left:85px;top:605px;width:77px;height:25px;background:#ffffff;text-align:center;color:#222;line-height:27px;">24-09-19</div>
<div class="c" style="left:163px;top:605px;width:94px;height:25px;background:#ffffff;text-align:center;line-height:27px;"><span style="color:#0f6d0f">博洛尼亚</span></div>
<div class="c" style="left:258px;top:605px;width:91px;height:25px;background:#ffffff;text-align:center;line-height:27px;"><span style="color:#c81e1e">0-0</span><span style="color:#222">(0-0)</span></div>
<div class="c" style="left:350px;top:605px;width:39px;height:25px;background:#ffffff;text-align:center;color:#222;line-height:27px;">8-3</div>
<div class="c" style="left:390px;top:605px;width:113px;height:25px;background:#ffffff;text-align:center;line-height:27px;"><span style="color:#111">顿涅茨克矿工</span></div>
<div class="c" style="left:504px;top:605px;width:44px;height:25px;background:#fffaf6;text-align:center;color:#222;line-height:27px;">0.89</div>
<div class="c" style="left:549px;top:605px;width:96px;height:25px;background:#fffaf6;text-align:center;color:#222;line-height:27px;">半球</div>
<div class="c" style="left:646px;top:605px;width:45px;height:25px;background:#fffaf6;text-align:center;color:#222;line-height:27px;">1.00</div>
<div class="c" style="left:692px;top:605px;width:61px;height:25px;background:#f1f8fc;text-align:center;color:#222;line-height:27px;">1.92</div>
<div class="c" style="left:754px;top:605px;width:61px;height:25px;background:#f1f8fc;text-align:center;color:#222;line-height:27px;">3.51</div>
<div class="c" style="left:816px;top:605px;width:77px;height:25px;background:#f1f8fc;text-align:center;color:#222;line-height:27px;">4.04</div>
<div class="c" style="left:894px;top:605px;width:38px;height:25px;background:#ffffff;text-align:center;color:#0f6d0f;line-height:27px;">平</div>
<div class="c" style="left:933px;top:605px;width:38px;height:25px;background:#ffffff;text-align:center;color:#1a1aaa;line-height:27px;">输</div>
<div class="c" style="left:972px;top:605px;width:58px;height:25px;background:#ffffff;text-align:center;color:#1a1aaa;line-height:27px;">小</div>
<div class="c" style="left:4px;top:631px;width:80px;height:25px;background:#0088ff;text-align:center;color:#fff;-webkit-text-stroke:0.25px #fff;line-height:27px;">意甲</div>
<div class="c" style="left:3px;top:631px;width:1px;height:25px;background:#8cc9ff;"></div>
<div class="c" style="left:4px;top:656px;width:80px;height:1px;background:#7fc3ff;"></div>
<div class="c" style="left:85px;top:631px;width:77px;height:25px;background:#f0f0f0;text-align:center;color:#222;line-height:27px;">24-09-14</div>
<div class="c" style="left:163px;top:631px;width:94px;height:25px;background:#f0f0f0;text-align:center;line-height:27px;"><span style="color:#111">科莫</span></div>
<div class="c" style="left:258px;top:631px;width:91px;height:25px;background:#f0f0f0;text-align:center;line-height:27px;"><span style="color:#c81e1e">2-2</span><span style="color:#222">(1-0)</span></div>
<div class="c" style="left:350px;top:631px;width:39px;height:25px;background:#f0f0f0;text-align:center;color:#222;line-height:27px;">4-3</div>
<div class="c" style="left:390px;top:631px;width:113px;height:25px;background:#f0f0f0;text-align:center;line-height:27px;"><span style="color:#0f6d0f">博洛尼亚</span></div>
<div class="c" style="left:504px;top:631px;width:44px;height:25px;background:#fffaf6;text-align:center;color:#222;line-height:27px;">1.08</div>
<div class="c" style="left:549px;top:631px;width:96px;height:25px;background:#fffaf6;text-align:center;color:#222;line-height:27px;">平手</div>
<div class="c" style="left:646px;top:631px;width:45px;height:25px;background:#fffaf6;text-align:center;color:#222;line-height:27px;">0.81</div>
<div class="c" style="left:692px;top:631px;width:61px;height:25px;background:#f1f8fc;text-align:center;color:#222;line-height:27px;">2.99</div>
<div class="c" style="left:754px;top:631px;width:61px;height:25px;background:#f1f8fc;text-align:center;color:#222;line-height:27px;">3.09</div>
<div class="c" style="left:816px;top:631px;width:77px;height:25px;background:#f1f8fc;text-align:center;color:#222;line-height:27px;">2.51</div>
<div class="c" style="left:894px;top:631px;width:38px;height:25px;background:#f0f0f0;text-align:center;color:#0f6d0f;line-height:27px;">平</div>
<div class="c" style="left:933px;top:631px;width:38px;height:25px;background:#f0f0f0;text-align:center;color:#0f6d0f;line-height:27px;">走</div>
<div class="c" style="left:972px;top:631px;width:58px;height:25px;background:#f0f0f0;text-align:center;color:#c81e1e;line-height:27px;">大</div>
<div class="c" style="left:4px;top:657px;width:80px;height:25px;background:#0088ff;text-align:center;color:#fff;-webkit-text-stroke:0.25px #fff;line-height:27px;">意甲</div>
<div class="c" style="left:3px;top:657px;width:1px;height:25px;background:#8cc9ff;"></div>
<div class="c" style="left:4px;top:682px;width:80px;height:1px;background:#7fc3ff;"></div>
<div class="c" style="left:85px;top:657px;width:77px;height:25px;background:#ffffff;text-align:center;color:#222;line-height:27px;">24-09-01</div>
<div class="c" style="left:163px;top:657px;width:94px;height:25px;background:#ffffff;text-align:center;line-height:27px;"><span style="color:#0f6d0f">博洛尼亚</span></div>
<div class="c" style="left:258px;top:657px;width:91px;height:25px;background:#ffffff;text-align:center;line-height:27px;"><span style="color:#c81e1e">1-1</span><span style="color:#222">(1-1)</span></div>
<div class="c" style="left:350px;top:657px;width:39px;height:25px;background:#ffffff;text-align:center;color:#222;line-height:27px;">6-3</div>
<div class="c" style="left:390px;top:657px;width:113px;height:25px;background:#ffffff;text-align:center;line-height:27px;"><span style="color:#111">恩波利</span></div>
<div class="c" style="left:504px;top:657px;width:44px;height:25px;background:#fffaf6;text-align:center;color:#222;line-height:27px;">0.96</div>
<div class="c" style="left:549px;top:657px;width:96px;height:25px;background:#fffaf6;text-align:center;color:#222;line-height:27px;">半/一</div>
<div class="c" style="left:646px;top:657px;width:45px;height:25px;background:#fffaf6;text-align:center;color:#222;line-height:27px;">0.93</div>
<div class="c" style="left:692px;top:657px;width:61px;height:25px;background:#f1f8fc;text-align:center;color:#222;line-height:27px;">1.69</div>
<div class="c" style="left:754px;top:657px;width:61px;height:25px;background:#f1f8fc;text-align:center;color:#222;line-height:27px;">3.60</div>
<div class="c" style="left:816px;top:657px;width:77px;height:25px;background:#f1f8fc;text-align:center;color:#222;line-height:27px;">5.42</div>
<div class="c" style="left:894px;top:657px;width:38px;height:25px;background:#ffffff;text-align:center;color:#0f6d0f;line-height:27px;">平</div>
<div class="c" style="left:933px;top:657px;width:38px;height:25px;background:#ffffff;text-align:center;color:#1a1aaa;line-height:27px;">输</div>
<div class="c" style="left:972px;top:657px;width:58px;height:25px;background:#ffffff;text-align:center;color:#1a1aaa;line-height:27px;">小</div>
<div class="c" style="left:4px;top:683px;width:80px;height:25px;background:#0088ff;text-align:center;color:#fff;-webkit-text-stroke:0.25px #fff;line-height:27px;">意甲</div>
<div class="c" style="left:3px;top:683px;width:1px;height:25px;background:#8cc9ff;"></div>
<div class="c" style="left:85px;top:683px;width:77px;height:25px;background:#f0f0f0;text-align:center;color:#222;line-height:27px;">24-08-26</div>
<div class="c" style="left:163px;top:683px;width:94px;height:25px;background:#f0f0f0;text-align:center;line-height:27px;"><span style="color:#111">那不勒斯</span></div>
<div class="c" style="left:258px;top:683px;width:91px;height:25px;background:#f0f0f0;text-align:center;line-height:27px;"><span style="color:#c81e1e">3-0</span><span style="color:#222">(1-0)</span></div>
<div class="c" style="left:350px;top:683px;width:39px;height:25px;background:#f0f0f0;text-align:center;color:#222;line-height:27px;">7-5</div>
<div class="c" style="left:390px;top:683px;width:113px;height:25px;background:#f0f0f0;text-align:center;line-height:27px;"><span style="color:#0f6d0f">博洛尼亚</span></div>
<div class="c" style="left:504px;top:683px;width:44px;height:25px;background:#fffaf6;text-align:center;color:#222;line-height:27px;">1.02</div>
<div class="c" style="left:549px;top:683px;width:96px;height:25px;background:#fffaf6;text-align:center;color:#222;line-height:27px;">半球</div>
<div class="c" style="left:646px;top:683px;width:45px;height:25px;background:#fffaf6;text-align:center;color:#222;line-height:27px;">0.87</div>
<div class="c" style="left:692px;top:683px;width:61px;height:25px;background:#f1f8fc;text-align:center;color:#222;line-height:27px;">1.96</div>
<div class="c" style="left:754px;top:683px;width:61px;height:25px;background:#f1f8fc;text-align:center;color:#222;line-height:27px;">3.40</div>
<div class="c" style="left:816px;top:683px;width:77px;height:25px;background:#f1f8fc;text-align:center;color:#222;line-height:27px;">4.01</div>
<div class="c" style="left:894px;top:683px;width:38px;height:25px;background:#f0f0f0;text-align:center;color:#1a1aaa;line-height:27px;">负</div>
<div class="c" style="left:933px;top:683px;width:38px;height:25px;background:#f0f0f0;text-align:center;color:#1a1aaa;line-height:27px;">输</div>
<div class="c" style="left:972px;top:683px;width:58px;height:25px;background:#f0f0f0;text-align:center;color:#c81e1e;line-height:27px;">大</div>
<div class="c" style="left:4px;top:709px;width:1026px;height:25px;background:#fff;text-align:center;line-height:26px;color:#222;letter-spacing:0.22px;">近<span style="color:#c81e1e">10</span>场,胜1平6负3, 胜率:<span style="color:#c81e1e">10%</span> 让胜率:<span style="color:#c81e1e">20%</span> 大率:<span style="color:#c81e1e">40%</span> 单率:<span style="color:#c81e1e">20%</span></div>
<div class="c" style="left:3px;top:33px;width:1028px;height:1px;background:#e6e6f8"></div>
</body></html>
